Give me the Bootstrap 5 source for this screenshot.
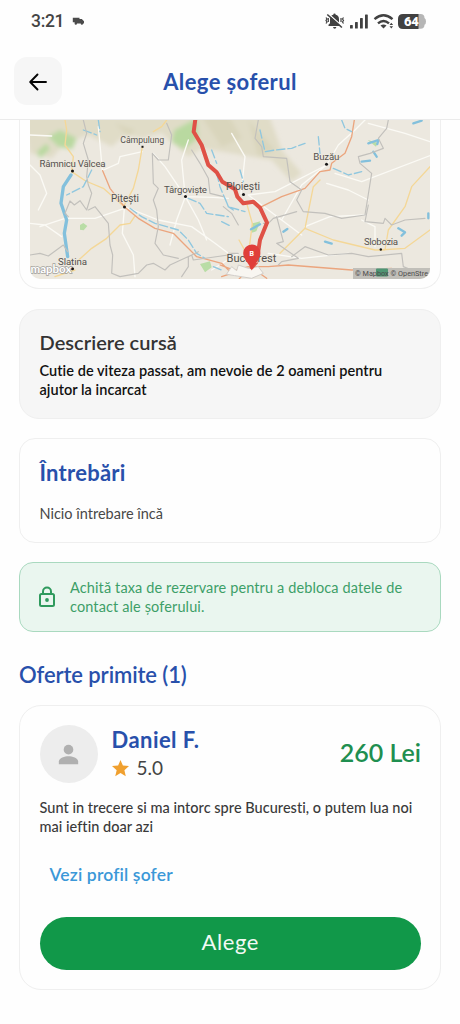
<!DOCTYPE html>
<html lang="ro">
<head>
<meta charset="utf-8">
<meta name="viewport" content="width=device-width, initial-scale=1">
<title>Alege șoferul</title>
<link rel="stylesheet" href="https://cdn.jsdelivr.net/npm/bootstrap@5.3.0/dist/css/bootstrap.min.css">
<style>
body{font-family:Lato,"Noto Sans",sans-serif;font-variant-ligatures:none;background:#fefefe;color:#333;width:460px;height:1024px;overflow:hidden}
.blue-text{color:#2850ab}
.status-bar{height:42px;padding:0 34px 0 31px}
.clock{font:500 17.5px/20px Roboto,sans-serif;color:#444;letter-spacing:-.3px}
.top-bar{height:78px;padding:0 14px;border-bottom:1px solid #ebebeb}
.back-btn{width:48px;height:48px;border-radius:13px;background:#f6f6f6}
.top-title{font-size:22px;font-weight:700;line-height:28px;letter-spacing:.4px;padding-top:2px}
.main-col{padding:0 19px}
.panel{border:1px solid #efefef;border-radius:20px;background:#fefefe}
.map-panel{height:169px;border-top:0;border-radius:0 0 20px 20px;padding:0 10px 9px}
.map-panel svg{border-radius:0 0 10px 10px}
.desc-panel{height:110px;margin-top:20px;padding:18px 19px 18px 19.500px;background:#f6f6f6}
.desc-title{font-size:20px;font-weight:600;line-height:28px;letter-spacing:.05px}
.desc-text{font-size:14.5px;font-weight:600;line-height:19px;color:#111;margin:5px 0 0;letter-spacing:.05px}
.q-panel{height:105px;margin-top:19px;padding:19px 19.500px;border-radius:16px}
.q-title{font-size:22px;font-weight:700;line-height:30px;letter-spacing:.25px}
.q-text{font-size:14.5px;line-height:20px;color:#484848}
.lock-note{height:70px;margin-top:19px;padding:0 16px;border:1px solid #a9d9bf;border-radius:14px;background:#eaf6ef;color:#3d9f68;font-size:14.5px;line-height:19px;letter-spacing:.12px}
.offers-title{font-size:22px;font-weight:600;line-height:30px;margin-top:28px;letter-spacing:-.1px}
.offer{height:285px;margin-top:15px;padding:19px 19px 19px 19.500px;border-radius:22px}
.avatar{width:58px;height:58px;border-radius:50%;background:#ededed}
.driver-info{margin-left:14px}
.driver{font-size:22px;font-weight:700;line-height:28px;letter-spacing:.45px}
.rating{font-size:19px;line-height:28px;color:#444}
.price{font-size:25px;font-weight:600;color:#1f8f50;margin-top:-3px}
.offer-text{font-size:14.5px;font-weight:500;line-height:19px;margin-top:15px;color:#3a3a3a;letter-spacing:.03px}
.profile-link{font-size:17.5px;font-weight:600;line-height:24px;margin:27px 0 0 10px;color:#3b98d8;letter-spacing:.15px}
.btn-pick{height:53px;margin-top:30px;padding:0 0 4px;background:#119849;color:#f1faf4;font-size:22px;letter-spacing:.6px}
.btn-pick:hover{background:#0d843e;color:#fff}
</style>
</head>
<body>
<div class="status-bar d-flex align-items-center justify-content-between">
  <div class="d-flex align-items-center"><span class="clock">3:21</span>
    <svg class="ms-2" width="13" height="8" viewBox="0 0 13 8" fill="#4b4b4b"><path d="M.8.800h6.700v1.200h2.300l2.200 2.300v2.200h-.9a1.200 1.200 0 0 1-2.400 0H5a1.200 1.200 0 0 1-2.400 0V5.300H.8z"/></svg>
  </div>
  <svg width="102" height="20" viewBox="324 10 102 20" fill="#414141">
    <path d="M334.500 12.500q1.200 0 1.200 1.200q3.300.8 3.300 4.500v4l1.500 1.500v1.300h-12v-1.300l1.500-1.500v-4q0-3.700 3.300-4.500q0-1.200 1.200-1.200M333 26h3.400q-.3 1.700-1.700 1.700T333 26"/>
    <path d="M328.300 12.800l14 12.500" stroke="#fefefe" stroke-width="1.300"/><path d="M327.300 13.500l14.600 13" stroke="#414141" stroke-width="1.600" fill="none"/>
    <path d="M326 16.500l1 1.500-1 1.500 1 1.500-1 1.500M328.300 17v4M343.500 16.500l-1 1.500 1 1.500-1 1.500 1 1.500M341 17v4" stroke="#414141" stroke-width="1.200" fill="none"/>
    <rect x="350" y="24" width="2.800" height="3.500" rx=".6"/><rect x="355" y="21" width="2.800" height="6.500" rx=".6"/><rect x="360" y="17" width="2.800" height="10.500" rx=".6"/><rect x="365" y="13.500" width="2.800" height="14" rx=".6"/>
    <g fill="none" stroke="#414141" stroke-width="2.400"><path d="M374.500 18.200Q383.500 10.500 392.500 18.200"/><path d="M378 22.300Q383.500 17.500 389 22.300"/></g><path d="M380.500 24.500q3-2.200 6 0l-3 3z"/><path d="M389.500 24l1.800-2.300 1.800 2.300zM389.500 25.200l1.800 2.300 1.800-2.300z"/>
    <path d="M418 13h2.500q4 0 4 4q1.500.7 1.500 3.400t-1.500 3.400q0 4-4 4H418z" fill="#b6b6b6"/><path d="M403 13h15.500v15H403q-5 0-5-5v-5q0-5 5-5"/>
    <text x="404" y="25.200" font-family="Roboto,sans-serif" font-weight="900" font-size="13" letter-spacing="-.3" fill="#fff">64</text>
  </svg>
</div>
<header class="top-bar d-flex align-items-center justify-content-between">
  <button class="back-btn btn p-0 d-flex align-items-center justify-content-center" aria-label="Înapoi"><svg width="20" height="20" viewBox="0 0 20 20" fill="none" stroke="#050505" stroke-width="1.900" stroke-linecap="round" stroke-linejoin="round"><path d="M18 11H2.500M9.500 3.500L2.200 11l7.300 7.500"/></svg></button>
  <h1 class="top-title blue-text mb-0">Alege șoferul</h1>
  <span class="px-4"></span>
</header>
<main class="main-col">
<section class="panel map-panel">
<svg class="d-block" width="400" height="159" viewBox="30 120 400 159">
  <defs><filter id="soft" x="-30%" y="-30%" width="160%" height="160%"><feGaussianBlur stdDeviation="6"/></filter></defs>
  <rect x="30" y="120" width="400" height="159" fill="#ece8df"/>
  <g transform="translate(15 110) scale(.33333)" fill="none" stroke-linecap="round" stroke-linejoin="round">
    <g filter="url(#soft)">
      <path d="M20 10H760L800 120L860 190L830 215L770 150L650 130L560 115L520 140L440 70L380 85L330 75L290 110L220 75L150 100L110 145L45 130z" fill="#e0dcc7"/>
      <path d="M100 80L135 60L185 85L172 118L130 110zM65 125L95 100L105 118L75 145zM478 60L545 25L550 85L505 118L470 95z" fill="#b9d9a0"/>
      <path d="M560 20L640 15L680 85L620 110zM700 30L780 120L730 140zM300 40l60 20-20 20z" fill="#d9d5bc"/>
    </g>
    <path d="M195 345l10-6 12 9-11 13-11-2zM555 462l30-8 5 18-20 15zM712 340l24-6-12 30-14 4zM1058 90l30 8-5 12z" fill="#b9dda6"/>
    <g stroke="#fbfaf5" stroke-width="4">
      <path d="M45 75L110 78M45 165L75 195L95 250L70 300M45 340L90 345L140 380M75 350L150 325L240 325L328 295L322 370L355 435L360 500M328 290L430 330L530 350L600 400L640 430M250 50L262 180M265 180L310 160L315 140L382 125M415 130L450 170L511 260L485 330L465 405M511 260L550 330L575 390M511 260L595 262L640 265M520 90L500 150L510 255"/>
      <path d="M650 70L690 140L678 250M700 255L780 245L935 165L970 105L1020 60L1055 25M935 165L860 225L800 330L860 375M700 255L800 330M935 220L1000 240L1060 270M960 190L1040 215L1250 135M1060 40L1170 70L1245 95M870 350L945 320L1050 315M1040 330L1080 350L1080 410M760 430L860 445L1000 430M670 430L590 480"/>
    </g>
    <path d="M150 30L155 60L150 105L175 140L170 185L212 213L265 235L328 290M382 110L370 180L355 235L328 285M360 318L345 340L315 345L275 385L230 415L180 460M120 500L180 480M415 65L440 50L455 30M672 390L700 440M695 280L712 340L700 435M795 430L870 355L895 230L915 210M870 355L955 390L1080 420L1110 420L1120 360L1170 290L1190 230L1245 170M1090 420L1170 415L1245 360" stroke="#f4d797" stroke-width="4"/>
    <path d="M263 182L285 235L328 290L370 325L420 355L475 370L510 405L545 440L620 460L650 490M740 290L800 260L870 235L915 185L945 180L950 160L990 130L1010 80L1018 30M700 470L760 470L820 465L1010 480L1130 475M615 465L660 482L700 470M620 500L680 480M720 480L755 505M700 475L670 510" stroke="#eba57e" stroke-width="4"/>
    <path d="M250 30L255 65M205 60L245 75M230 180L205 230L155 255M345 295L380 320L420 340L490 360L520 390L545 430L570 445M520 265L555 280L575 310L640 320M590 120L605 160M605 190L615 230L640 290L655 300M620 335L650 350M595 470L620 480M735 60L750 125L780 120L830 115L870 100M910 80L915 130M980 30L990 55L1010 65M955 175L1000 195L1040 185M675 180L685 215M630 265L640 290L690 305" stroke="#8fc7df" stroke-width="4" stroke-dasharray="25 9"/>
    <path d="M168 195L145 230L138 280L155 330L148 370L158 440" stroke="#83c0dc" stroke-width="10"/>
    <path d="M708 358L735 343M1060 100l30-10-3 12M1040 155l25-3M1075 125l10 15M805 365l12-8M930 395l20 6M1150 355l20 12-10 10M1240 310v15M1195 40l25-8" stroke="#83c0dc" stroke-width="7"/>
    <path d="M205 30L215 70L205 100L220 150L215 200L220 225L230 250L215 300L195 272L178 285L165 273L150 310L160 320M45 435L75 430L100 438L145 405L158 425M220 300L240 290L280 340L285 405L293 435L290 490L315 500L370 490L395 465L415 460L450 480L465 465L530 435L535 450L640 435M455 40L470 75L460 150L430 150L412 130L415 220L430 235L415 270L425 300L430 350L420 400L445 435L490 445M530 120L555 160L580 205L585 250L625 260M500 500L520 470L520 440L550 425M640 430L670 430M730 30L720 85L740 110L745 140L815 145L825 215L860 240L845 270L865 305L930 310L980 325L1050 315L1070 190L1035 160L1030 140L1065 130L1105 115L1090 85L1115 55L1120 30M845 305L775 325L760 340L745 340M1060 285L1050 335L1105 340L1110 325L1130 345L1170 330L1230 325M670 345L650 310L625 290M785 320L805 395L785 400L850 445L800 455L790 465M830 440L870 410L940 435L1010 430L1060 440L1160 430L1165 470L1190 480" stroke="#c2c0bc" stroke-width="3.500"/>
    <path d="M635 492L650 470L665 482L670 465L700 475L730 470L745 490L710 505L660 497z" fill="#f8f6f1" stroke="#d1ceca" stroke-width="3"/>
    <path d="M541 28L536 65L560 105L580 165L605 187L622 215L660 238L667 260L685 280L715 275L735 293L756 338L735 390L725 455L710 472" stroke="#df5146" stroke-width="12"/>
  </g>
  <g fill="#161616"><rect x="141.500" y="145.800" width="2" height="2"/><circle cx="72.500" cy="171" r="1.500"/><circle cx="124.500" cy="207" r="1.500"/><circle cx="185.500" cy="196.500" r="1.500"/><circle cx="72.500" cy="268.800" r="1.500"/><circle cx="243.500" cy="194.500" r="1.500"/><circle cx="326.500" cy="164.200" r="1.500"/><circle cx="380.800" cy="249.500" r="1.200"/></g>
  <g font-family="Roboto,sans-serif" font-size="9.700" text-anchor="middle" fill="#54514e" stroke="#eeeadf" stroke-width="1" paint-order="stroke" lengthAdjust="spacingAndGlyphs">
    <text x="142.300" y="143" font-size="8.800" textLength="44">Câmpulung</text><text x="72.600" y="167" textLength="66">Râmnicu Vâlcea</text><text x="125" y="202" font-size="10" textLength="28" lengthAdjust="spacingAndGlyphs">Pitești</text><text x="185.500" y="192.500" textLength="43">Târgoviște</text><text x="72.500" y="265" textLength="29">Slatina</text><text x="326.300" y="160" textLength="26">Buzău</text><text x="381" y="245" textLength="34">Slobozia</text><text x="251.500" y="262" font-size="11" textLength="50" lengthAdjust="spacingAndGlyphs">Bucharest</text>
    <text x="243" y="190" font-size="10" textLength="34" lengthAdjust="spacingAndGlyphs" stroke="none">Ploiești</text>
  </g>
  <path d="M251.800 270.500C249.500 263.800 243.200 259.500 243.200 253A8.600 8.600 0 0 1 260.400 253C260.400 259.500 254.100 263.800 251.800 270.500Z" fill="#e03e3a"/>
  <text x="251.800" y="255.700" text-anchor="middle" font-family="Roboto,sans-serif" font-weight="700" font-size="7" fill="#fff">B</text>
  <text x="30.500" y="273" font-family="Lato,sans-serif" font-weight="700" font-size="12" textLength="41" lengthAdjust="spacingAndGlyphs" fill="#fff" stroke="#a19f9b" stroke-width="1.400" paint-order="stroke">mapbox</text>
  <rect x="353" y="268" width="77" height="11" fill="#c1bfb9"/><rect x="376" y="268.500" width="12" height="8" rx="1" fill="#4f9573"/>
  <text x="355" y="276.300" font-family="Roboto,sans-serif" font-size="7.200" textLength="73" lengthAdjust="spacingAndGlyphs" fill="#4c4c4c">© Mapbox © OpenStre</text>
</svg>
</section>
<section class="panel desc-panel">
  <h2 class="desc-title m-0">Descriere cursă</h2>
  <p class="desc-text">Cutie de viteza passat, am nevoie de 2 oameni pentru<br>ajutor la incarcat</p>
</section>
<section class="panel q-panel">
  <h2 class="q-title blue-text m-0">Întrebări</h2>
  <p class="q-text mb-0 mt-3">Nicio întrebare încă</p>
</section>
<div class="lock-note d-flex align-items-center">
  <svg class="flex-shrink-0" width="22" height="24" viewBox="0 0 22 24" fill="none" stroke="#2f9a5d" stroke-width="2"><rect x="4" y="9" width="14" height="12" rx="1.500"/><path d="M7 9V6.500a4 4 0 0 1 8 0V9"/><circle cx="11" cy="15" r="1.900" fill="#2f9a5d" stroke="none"/></svg>
  <span class="lock-text ms-2 ps-1">Achită taxa de rezervare pentru a debloca datele de<br>contact ale șoferului.</span>
</div>
<h2 class="offers-title blue-text mb-0">Oferte primite (1)</h2>
<section class="panel offer">
  <div class="d-flex align-items-center">
    <div class="avatar d-flex align-items-center justify-content-center"><svg width="29" height="29" viewBox="0 0 24 24" fill="#b0b0b0"><circle cx="12" cy="8" r="4"/><path d="M4 20v-2.200C4 15 9 13.500 12 13.500s8 1.500 8 4.300V20z"/></svg></div>
    <div class="driver-info flex-grow-1">
      <div class="driver blue-text">Daniel F.</div>
      <div class="rating d-flex align-items-center"><svg width="17" height="17" viewBox="2 2 20 20" fill="#f0a02f"><path d="M12 17.300L18.200 21l-1.600-7L22 9.200l-7.200-.6L12 2 9.200 8.600 2 9.200 7.500 14l-1.700 7z"/></svg><span class="ps-2">5.0</span></div>
    </div>
    <div class="price">260 Lei</div>
  </div>
  <p class="offer-text mb-0">Sunt in trecere si ma intorc spre Bucuresti, o putem lua noi<br>mai ieftin doar azi</p>
  <a class="profile-link d-block text-decoration-none" href="#">Vezi profil șofer</a>
  <button class="btn btn-pick rounded-pill w-100 border-0">Alege</button>
</section>
</main>
<script src="https://cdn.jsdelivr.net/npm/bootstrap@5.3.0/dist/js/bootstrap.bundle.min.js"></script>
</body>
</html>
